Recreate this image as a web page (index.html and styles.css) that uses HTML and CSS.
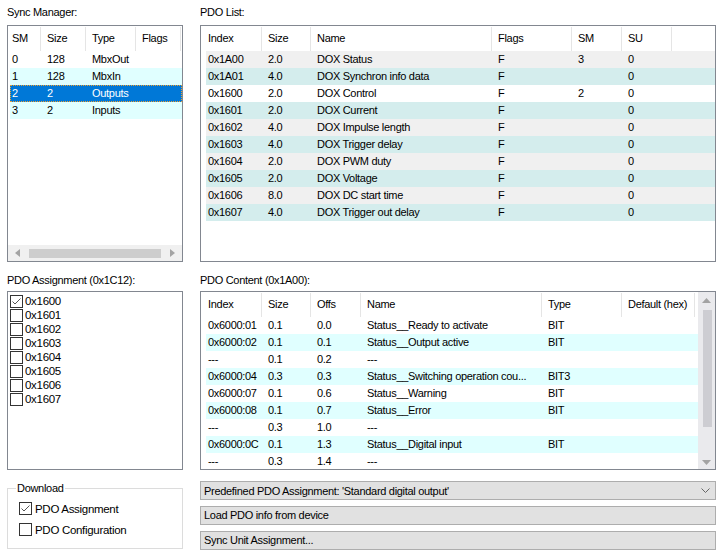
FILE: index.html
```html
<!DOCTYPE html>
<html>
<head>
<meta charset="utf-8">
<link rel="stylesheet" href="styles.css">
</head>
<body>
<div class="app">
  <div class="label">Sync Manager:</div>
  <div class="label">PDO List:</div>

  <div class="box sm">
    <div class="lv-head">
      <div class="c sm-c1 first">SM</div><div class="c sm-c2">Size</div><div class="c sm-c3">Type</div><div class="c sm-c4">Flags</div>
    </div>
    <div class="rows">
      <div class="row"><div class="c sm-c1 first">0</div><div class="c sm-c2">128</div><div class="c sm-c3">MbxOut</div><div class="c sm-c4"></div></div>
      <div class="row cyan"><div class="c sm-c1 first">1</div><div class="c sm-c2">128</div><div class="c sm-c3">MbxIn</div><div class="c sm-c4"></div></div>
      <div class="row sel"><div class="c sm-c1 first">2</div><div class="c sm-c2">2</div><div class="c sm-c3">Outputs</div><div class="c sm-c4"></div></div>
      <div class="row cyan"><div class="c sm-c1 first">3</div><div class="c sm-c2">2</div><div class="c sm-c3">Inputs</div><div class="c sm-c4"></div></div>
    </div>
    <div class="hscroll">
      <svg class="arr" width="5" height="8" viewBox="0 0 5 8"><path d="M5 0 L0 4 L5 8 Z" fill="#a3a3a3"/></svg>
      <div class="hthumb"></div>
      <svg class="arr" width="5" height="8" viewBox="0 0 5 8"><path d="M0 0 L5 4 L0 8 Z" fill="#a3a3a3"/></svg>
    </div>
  </div>

  <div class="box pl">
    <div class="lv-head">
      <div class="c pl-c1 first">Index</div><div class="c pl-c2">Size</div><div class="c pl-c3">Name</div><div class="c pl-c4">Flags</div><div class="c pl-c5">SM</div><div class="c pl-c6">SU</div>
    </div>
    <div class="rows">
      <div class="row gray"><div class="c pl-c1 first">0x1A00</div><div class="c pl-c2">2.0</div><div class="c pl-c3">DOX Status</div><div class="c pl-c4">F</div><div class="c pl-c5">3</div><div class="c pl-c6">0</div></div>
      <div class="row teal"><div class="c pl-c1 first">0x1A01</div><div class="c pl-c2">4.0</div><div class="c pl-c3">DOX Synchron info data</div><div class="c pl-c4">F</div><div class="c pl-c5"></div><div class="c pl-c6">0</div></div>
      <div class="row"><div class="c pl-c1 first">0x1600</div><div class="c pl-c2">2.0</div><div class="c pl-c3">DOX Control</div><div class="c pl-c4">F</div><div class="c pl-c5">2</div><div class="c pl-c6">0</div></div>
      <div class="row teal"><div class="c pl-c1 first">0x1601</div><div class="c pl-c2">2.0</div><div class="c pl-c3">DOX Current</div><div class="c pl-c4">F</div><div class="c pl-c5"></div><div class="c pl-c6">0</div></div>
      <div class="row gray"><div class="c pl-c1 first">0x1602</div><div class="c pl-c2">4.0</div><div class="c pl-c3">DOX Impulse length</div><div class="c pl-c4">F</div><div class="c pl-c5"></div><div class="c pl-c6">0</div></div>
      <div class="row teal"><div class="c pl-c1 first">0x1603</div><div class="c pl-c2">4.0</div><div class="c pl-c3">DOX Trigger delay</div><div class="c pl-c4">F</div><div class="c pl-c5"></div><div class="c pl-c6">0</div></div>
      <div class="row gray"><div class="c pl-c1 first">0x1604</div><div class="c pl-c2">2.0</div><div class="c pl-c3">DOX PWM duty</div><div class="c pl-c4">F</div><div class="c pl-c5"></div><div class="c pl-c6">0</div></div>
      <div class="row teal"><div class="c pl-c1 first">0x1605</div><div class="c pl-c2">2.0</div><div class="c pl-c3">DOX Voltage</div><div class="c pl-c4">F</div><div class="c pl-c5"></div><div class="c pl-c6">0</div></div>
      <div class="row gray"><div class="c pl-c1 first">0x1606</div><div class="c pl-c2">8.0</div><div class="c pl-c3">DOX DC start time</div><div class="c pl-c4">F</div><div class="c pl-c5"></div><div class="c pl-c6">0</div></div>
      <div class="row teal"><div class="c pl-c1 first">0x1607</div><div class="c pl-c2">4.0</div><div class="c pl-c3">DOX Trigger out delay</div><div class="c pl-c4">F</div><div class="c pl-c5"></div><div class="c pl-c6">0</div></div>
    </div>
  </div>

  <div class="label label2">PDO Assignment (0x1C12):</div>
  <div class="label label2">PDO Content (0x1A00):</div>

  <div class="box assign">
    <div class="chk-item"><span class="cb"><svg width="11" height="11" viewBox="0 0 11 11"><path d="M1.5 5.5 L4 8 L9.5 2.5" fill="none" stroke="#555" stroke-width="1"/></svg></span>0x1600</div>
    <div class="chk-item"><span class="cb"></span>0x1601</div>
    <div class="chk-item"><span class="cb"></span>0x1602</div>
    <div class="chk-item"><span class="cb"></span>0x1603</div>
    <div class="chk-item"><span class="cb"></span>0x1604</div>
    <div class="chk-item"><span class="cb"></span>0x1605</div>
    <div class="chk-item"><span class="cb"></span>0x1606</div>
    <div class="chk-item"><span class="cb"></span>0x1607</div>
  </div>

  <div class="box pc">
    <div class="pc-main">
      <div class="lv-head">
        <div class="c pc-c1 first">Index</div><div class="c pc-c2">Size</div><div class="c pc-c3">Offs</div><div class="c pc-c4">Name</div><div class="c pc-c5">Type</div><div class="c pc-c6">Default (hex)</div>
      </div>
      <div class="rows">
        <div class="row"><div class="c pc-c1 first">0x6000:01</div><div class="c pc-c2">0.1</div><div class="c pc-c3">0.0</div><div class="c pc-c4">Status__Ready to activate</div><div class="c pc-c5">BIT</div><div class="c pc-c6"></div></div>
        <div class="row cyan"><div class="c pc-c1 first">0x6000:02</div><div class="c pc-c2">0.1</div><div class="c pc-c3">0.1</div><div class="c pc-c4">Status__Output active</div><div class="c pc-c5">BIT</div><div class="c pc-c6"></div></div>
        <div class="row"><div class="c pc-c1 first">---</div><div class="c pc-c2">0.1</div><div class="c pc-c3">0.2</div><div class="c pc-c4">---</div><div class="c pc-c5"></div><div class="c pc-c6"></div></div>
        <div class="row cyan"><div class="c pc-c1 first">0x6000:04</div><div class="c pc-c2">0.3</div><div class="c pc-c3">0.3</div><div class="c pc-c4">Status__Switching operation cou...</div><div class="c pc-c5">BIT3</div><div class="c pc-c6"></div></div>
        <div class="row"><div class="c pc-c1 first">0x6000:07</div><div class="c pc-c2">0.1</div><div class="c pc-c3">0.6</div><div class="c pc-c4">Status__Warning</div><div class="c pc-c5">BIT</div><div class="c pc-c6"></div></div>
        <div class="row cyan"><div class="c pc-c1 first">0x6000:08</div><div class="c pc-c2">0.1</div><div class="c pc-c3">0.7</div><div class="c pc-c4">Status__Error</div><div class="c pc-c5">BIT</div><div class="c pc-c6"></div></div>
        <div class="row"><div class="c pc-c1 first">---</div><div class="c pc-c2">0.3</div><div class="c pc-c3">1.0</div><div class="c pc-c4">---</div><div class="c pc-c5"></div><div class="c pc-c6"></div></div>
        <div class="row cyan"><div class="c pc-c1 first">0x6000:0C</div><div class="c pc-c2">0.1</div><div class="c pc-c3">1.3</div><div class="c pc-c4">Status__Digital input</div><div class="c pc-c5">BIT</div><div class="c pc-c6"></div></div>
        <div class="row"><div class="c pc-c1 first">---</div><div class="c pc-c2">0.3</div><div class="c pc-c3">1.4</div><div class="c pc-c4">---</div><div class="c pc-c5"></div><div class="c pc-c6"></div></div>
      </div>
    </div>
    <div class="vscroll">
      <svg class="varr" width="9" height="5" viewBox="0 0 9 5"><path d="M0 5 L4.5 0 L9 5 Z" fill="#a3a3a3"/></svg>
      <div class="vthumb"></div>
      <svg class="varr down" width="9" height="5" viewBox="0 0 9 5"><path d="M0 0 L4.5 5 L9 0 Z" fill="#a3a3a3"/></svg>
    </div>
  </div>

  <fieldset class="download">
    <legend>Download</legend>
    <div class="dl-item"><span class="cb"><svg width="11" height="11" viewBox="0 0 11 11"><path d="M1.5 5.5 L4 8 L9.5 2.5" fill="none" stroke="#555" stroke-width="1"/></svg></span>PDO Assignment</div>
    <div class="dl-item"><span class="cb"></span>PDO Configuration</div>
  </fieldset>

  <div class="actions">
    <div class="btn combo"><span>Predefined PDO Assignment: 'Standard digital output'</span><svg width="9" height="5" viewBox="0 0 9 5"><path d="M0.5 0.5 L4.5 4.5 L8.5 0.5" fill="none" stroke="#666" stroke-width="1"/></svg></div>
    <div class="btn">Load PDO info from device</div>
    <div class="btn">Sync Unit Assignment...</div>
  </div>
</div>
</body>
</html>
```

FILE: styles.css
```css
html, body {
  margin: 0;
  padding: 0;
  background: #ffffff;
}
body {
  font-family: "Liberation Sans", Arial, sans-serif;
  font-size: 11px;
  letter-spacing: -0.3px;
  color: #000;
}
.app {
  display: grid;
  grid-template-columns: 176px 516px;
  grid-template-rows: 25px 237px 29px 179px 85px;
  column-gap: 17px;
  padding-left: 7px;
}
.label {
  padding-top: 5px;
  line-height: 14px;
  white-space: nowrap;
}
.label2 {
  padding-top: 11px;
}
.box {
  border: 1px solid #828790;
  box-sizing: border-box;
  background: #fff;
  display: flex;
  flex-direction: column;
  overflow: hidden;
}
.lv-head {
  display: flex;
  height: 25px;
  line-height: 25px;
  padding-top: 1px;
  box-sizing: border-box;
  flex-shrink: 0;
}
.lv-head .c {
  box-shadow: inset -1px 0 0 #e5e5e5;
  line-height: 23px;
}
.rows {
  display: flex;
  flex-direction: column;
}
.row {
  display: flex;
  height: 17px;
  line-height: 17px;
}
.c {
  flex-shrink: 0;
  padding-left: 6px;
  box-sizing: border-box;
  white-space: nowrap;
  overflow: hidden;
}
.c.first {
  padding-left: 2px;
}
.cyan { background: #e0ffff; }
.gray { background: #f0f0f0; }
.teal { background: #d4eded; }
.sel {
  background: #0078d7;
  color: #fff;
  outline: 1px dotted #f0a030;
  outline-offset: -1px;
}

/* Sync manager */
.sm .lv-head, .sm .rows { padding-left: 2px; }
.sm-c1 { width: 31px; }
.sm-c2 { width: 45px; }
.sm-c3 { width: 50px; }
.sm-c4 { width: 45px; }
.hscroll {
  margin-top: auto;
  height: 16px;
  background: #f0f0f0;
  display: flex;
  align-items: center;
  padding: 0 7px;
  gap: 9px;
}
.hthumb {
  flex: 1;
  height: 9px;
  background: #cdcdcd;
}

/* PDO list */
.pl .lv-head, .pl .rows { padding-left: 5px; }
.pl-c1 { width: 56px; }
.pl-c2 { width: 49px; }
.pl-c3 { width: 181px; }
.pl-c4 { width: 80px; }
.pl-c5 { width: 50px; }
.pl-c6 { width: 50px; }

/* PDO assignment */
.assign {
  padding-top: 2px;
  padding-left: 2px;
}
.chk-item {
  display: flex;
  align-items: center;
  height: 14px;
  line-height: 14px;
  font-size: 11.5px;
}
.cb {
  width: 13px;
  height: 13px;
  border: 1px solid #333;
  box-sizing: border-box;
  background: #fff;
  display: inline-flex;
  align-items: center;
  justify-content: center;
  margin-right: 2px;
  flex-shrink: 0;
}

/* PDO content */
.pc {
  flex-direction: row;
}
.pc-main {
  flex: 1;
  display: flex;
  flex-direction: column;
  padding-left: 5px;
}
.pc-c1 { width: 56px; }
.pc-c2 { width: 49px; }
.pc-c3 { width: 50px; }
.pc-c4 { width: 181px; }
.pc-c5 { width: 80px; }
.pc-c6 { width: 73px; }
.vscroll {
  width: 17px;
  background: #eaeaed;
  display: flex;
  flex-direction: column;
  align-items: center;
  padding: 6px 0 4px;
  box-sizing: border-box;
}
.vthumb {
  width: 9px;
  height: 117px;
  margin-top: 7px;
  margin-left: 1px;
  background: #cdcdd2;
}
.varr.down {
  margin-top: auto;
}

/* Download group */
.download {
  margin: 11px 0 0 0;
  padding: 3px 0 0 0;
  border: 1px solid #dcdcdc;
  height: 68px;
  box-sizing: border-box;
  min-width: 0;
}
.download legend {
  padding: 0 1px;
  margin-left: 8px;
  line-height: 14px;
}
.dl-item {
  display: flex;
  align-items: center;
  height: 21px;
  padding-left: 11px;
  font-size: 11.5px;
}
.dl-item .cb {
  margin-right: 3px;
}

/* Buttons */
.actions {
  display: flex;
  flex-direction: column;
  padding-top: 11px;
  gap: 6px;
}
.btn {
  height: 19px;
  line-height: 17px;
  box-sizing: border-box;
  border: 1px solid #adadad;
  background: #e1e1e1;
  padding-left: 3px;
  white-space: nowrap;
}
.combo {
  display: flex;
  align-items: center;
  justify-content: space-between;
  padding-right: 5px;
  line-height: normal;
}
```
